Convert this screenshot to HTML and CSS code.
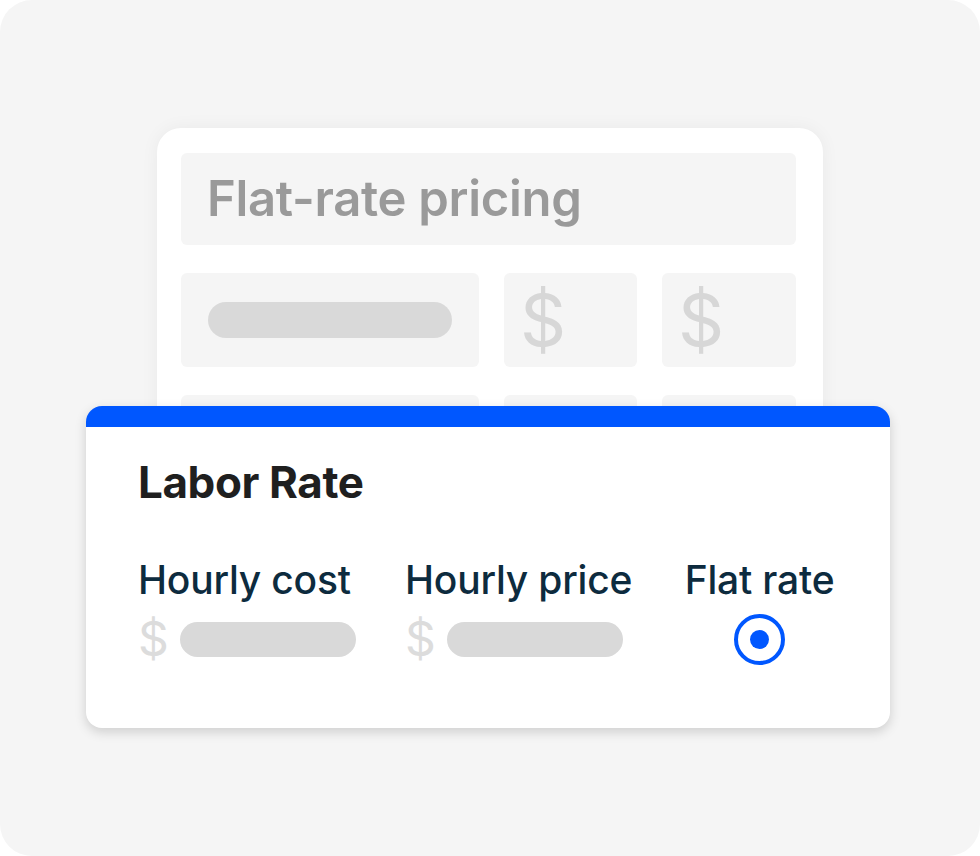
FILE: index.html
```html
<!DOCTYPE html>
<html lang="en">
<head>
<meta charset="utf-8">
<title>Labor Rate</title>
<link rel="stylesheet" href="styles.css">
</head>
<body>
<div class="frame">
  <div class="back-card">
    <div class="title-box"><span class="title-text">Flat-rate pricing</span></div>
    <div class="row">
      <div class="cell cell-wide"><div class="pill"></div></div>
      <div class="cell"><span class="dollar">$</span></div>
      <div class="cell"><span class="dollar">$</span></div>
    </div>
    <div class="row">
      <div class="cell cell-wide"></div>
      <div class="cell"></div>
      <div class="cell"></div>
    </div>
  </div>
  <div class="front-card">
    <h2 class="front-title">Labor Rate</h2>
    <div class="options">
      <div class="option opt-cost">
        <div class="opt-label">Hourly cost</div>
        <div class="field"><span class="field-dollar">$</span><span class="field-pill"></span></div>
      </div>
      <div class="option opt-price">
        <div class="opt-label">Hourly price</div>
        <div class="field"><span class="field-dollar">$</span><span class="field-pill"></span></div>
      </div>
      <div class="option opt-flat">
        <div class="opt-label">Flat rate</div>
        <div class="radio"><span class="radio-dot"></span></div>
      </div>
    </div>
  </div>
</div>
</body>
</html>
```
FILE: styles.css
```css
* { box-sizing: border-box; }
html, body { margin: 0; padding: 0; background: #ffffff; }
body { font-family: "Inter", "Noto Sans", sans-serif; }

.frame {
  width: 980px;
  height: 856px;
  background: #f5f5f5;
  border-radius: 32px;
  padding-top: 128px;
  overflow: hidden;
}

.back-card {
  margin-left: 157px;
  width: 666px;
  background: #ffffff;
  border-radius: 24px;
  padding: 25px 27px 24px 24px;
  box-shadow: 0 0 18px rgba(0, 0, 0, 0.05);
}

.title-box {
  height: 92px;
  background: #f5f5f5;
  border-radius: 6px;
  padding-left: 26px;
  display: flex;
  align-items: center;
}
.title-text {
  font-size: 49px;
  font-weight: 600;
  color: #9a9a9a;
  letter-spacing: -0.3px;
  line-height: 1;
  margin-top: -2px;
}

.row {
  margin-top: 28px;
  display: grid;
  grid-template-columns: 298px 133px 134px;
  column-gap: 25px;
  height: 94px;
}
.cell {
  background: #f5f5f5;
  border-radius: 6px;
  display: flex;
  align-items: center;
  padding-left: 16px;
}
.cell-wide { padding-left: 27px; }
.pill {
  width: 244px;
  height: 36px;
  border-radius: 18px;
  background: #d9d9d9;
}
.dollar {
  font-size: 72px;
  color: #d7d7d7;
  font-weight: 400;
  line-height: 1;
}

.front-card {
  position: relative;
  margin-left: 86px;
  margin-top: -107px;
  width: 804px;
  height: 322px;
  background: #ffffff;
  border-top: 21px solid #0057ff;
  border-radius: 16px;
  box-shadow: 0 4px 12px rgba(0, 0, 0, 0.16);
  padding: 30px 0 0 52px;
}
.front-title {
  margin: 0;
  font-size: 44px;
  font-weight: 700;
  color: #1f1f1f;
  letter-spacing: -0.4px;
  line-height: 50px;
}

.options {
  display: flex;
  margin-top: 51px;
}
.option { display: flex; flex-direction: column; }
.opt-cost { width: 267px; }
.opt-price { width: 279px; }
.opt-flat { width: 151px; align-items: center; }
.opt-label {
  font-size: 39px;
  font-weight: 500;
  color: #0d2b3e;
  letter-spacing: -0.2px;
  line-height: 44px;
  white-space: nowrap;
}
.field {
  display: flex;
  align-items: center;
  margin-top: 12px;
  height: 50px;
}
.field-dollar {
  font-size: 48px;
  color: #dcdcdc;
  line-height: 1;
  width: 42px;
}
.field-pill {
  width: 176px;
  height: 35px;
  border-radius: 18px;
  background: #d9d9d9;
}
.radio {
  margin-top: 12px;
  width: 51px;
  height: 51px;
  border: 4px solid #0057ff;
  border-radius: 50%;
  display: flex;
  align-items: center;
  justify-content: center;
}
.radio-dot {
  width: 19px;
  height: 19px;
  border-radius: 50%;
  background: #0057ff;
}
```
